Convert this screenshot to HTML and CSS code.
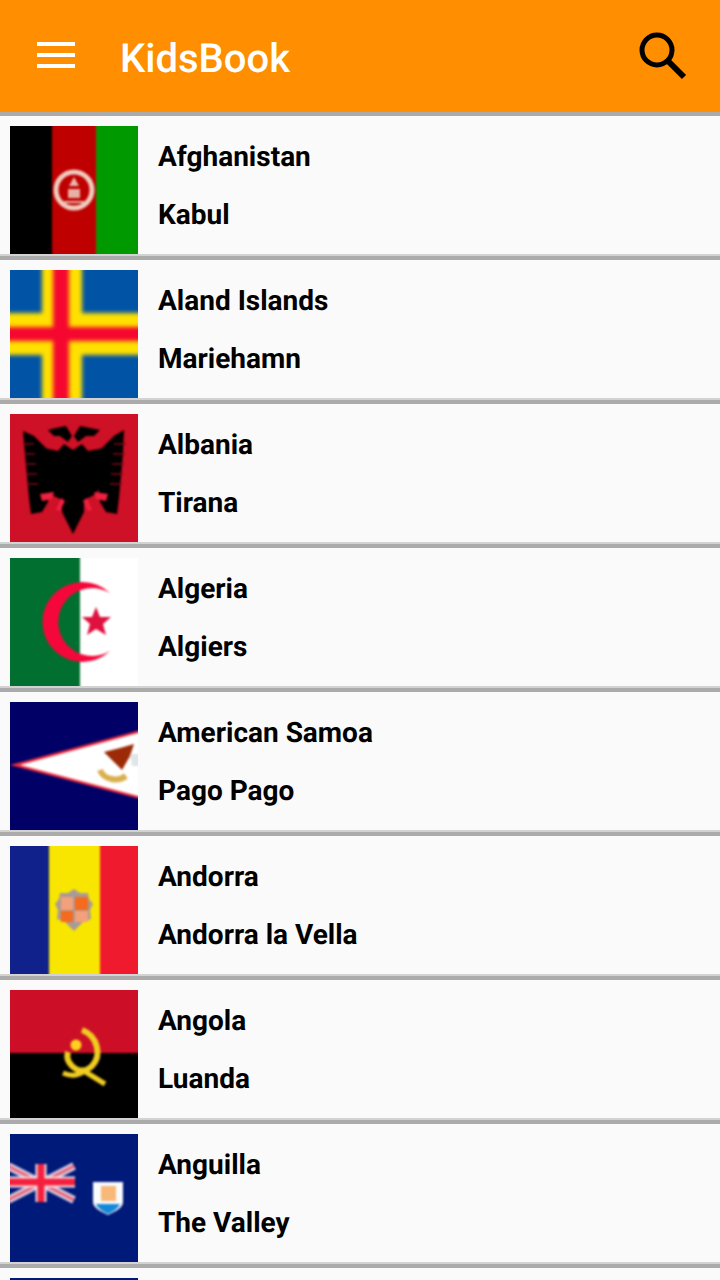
FILE: index.html
```html
<!DOCTYPE html>
<html lang="en">
<head>
<meta charset="utf-8">
<title>KidsBook</title>
<link rel="stylesheet" href="styles.css">
</head>
<body>
<div class="screen">
  <header class="appbar">
    <button class="menu-btn" aria-label="Menu"><span></span><span></span><span></span></button>
    <h1 class="title">KidsBook</h1>
    <svg class="search" viewBox="0 0 60 60" aria-label="Search"><circle cx="27" cy="25" r="15" fill="none" stroke="#000" stroke-width="5"/><path d="M38 36 L54 52" stroke="#000" stroke-width="6" fill="none"/></svg>
  </header>
  <ul class="list">
    <li class="row">
      <svg class="flag" viewBox="0 0 128 128"><g class="art">
        <rect x="-5" y="-5" width="47" height="138" fill="#000"/>
        <rect x="42" y="-5" width="44" height="138" fill="#bf0000"/>
        <rect x="86" y="-5" width="47" height="138" fill="#009a00"/>
        <circle cx="64" cy="64" r="18" fill="none" stroke="#f0cabe" stroke-width="5"/>
        <path d="M64 51 L69 60 H59 Z" fill="#eab8ac"/>
        <rect x="58" y="63" width="12" height="9" fill="#e8b0a4"/>
        <path d="M54 76 H74" stroke="#e8b8ac" stroke-width="2"/>
      </g></svg>
      <div class="names"><p>Afghanistan</p><p>Kabul</p></div>
    </li>
    <li class="row">
      <svg class="flag" viewBox="0 0 128 128"><g class="art-soft">
        <rect x="-8" y="-8" width="144" height="144" fill="#0053a5"/>
        <rect x="32" y="-8" width="40" height="144" fill="#ffe000"/>
        <rect x="-8" y="43" width="144" height="42" fill="#ffe000"/>
        <rect x="43" y="-8" width="16" height="144" fill="#f5072f"/>
        <rect x="-8" y="57" width="144" height="14" fill="#f5072f"/>
      </g></svg>
      <div class="names"><p>Aland Islands</p><p>Mariehamn</p></div>
    </li>
    <li class="row">
      <svg class="flag" viewBox="0 0 128 128"><rect width="128" height="128" fill="#ce1126"/><g class="art">
        <path fill="#000" d="M34 34 L48 37 L54 30 L63 36 L72 30 L78 37 L94 34 L95 64 L86 80 L74 86 L74 98 L68 110 L63 120 L58 110 L52 98 L52 86 L40 80 L33 64 Z"/>
        <path fill="#000" d="M38 16 L46 14 L56 12 L62 22 L58 28 L50 22 L44 22 Z M90 16 L80 14 L70 12 L64 22 L68 28 L76 22 L84 22 Z"/>
        <path fill="#000" d="M13 17 L24 22 L38 36 L40 70 L38 88 L32 98 L21 100 L19 84 L17 62 L15 40 Z"/>
        <path fill="#000" d="M114 16 L104 22 L90 36 L88 70 L90 88 L96 98 L107 100 L109 84 L111 62 L113 40 Z"/>
        <path stroke="#7e0a16" stroke-width="1.6" d="M13 30 H24 M14 40 H25 M15 50 H26 M16 60 H27 M17 70 H28 M104 30 H116 M103 40 H115 M102 50 H114 M101 60 H113 M100 70 H112"/>
        <path fill="#f02040" d="M30 80 L44 78 L42 85 L32 87 Z M98 80 L84 78 L86 85 L96 87 Z M51 84 L46 96 L50 97 L55 87 Z M77 84 L82 96 L78 97 L73 87 Z"/>
      </g></svg>
      <div class="names"><p>Albania</p><p>Tirana</p></div>
    </li>
    <li class="row">
      <svg class="flag" viewBox="0 0 128 128"><g class="art">
        <rect x="70" y="-5" width="70" height="138" fill="#fff"/>
        <rect x="-5" y="-5" width="75" height="138" fill="#006f2f"/>
        <path fill="#f5073b" d="M100 35 A40 40 0 1 0 100 93 A34 34 0 1 1 100 35 Z"/>
        <path fill="#e0103f" d="M86 49 L90 59 L101 59 L93 66 L96 77 L86 71 L77 77 L80 66 L72 59 L82 59 Z"/>
      </g></svg>
      <div class="names"><p>Algeria</p><p>Algiers</p></div>
    </li>
    <li class="row">
      <svg class="flag" viewBox="0 0 128 128"><g class="art">
        <rect x="-5" y="-5" width="138" height="138" fill="#000066"/>
        <path fill="#fff" stroke="#ef2b3d" stroke-width="2.5" d="M5 63 L135 28 V97 Z"/>
        <path fill="#9c2a06" d="M94 50 L110 46 L124 42 L120 54 L112 68 L104 60 Z"/>
        <path fill="none" stroke="#d9b04f" stroke-width="6" d="M90 68 C94 78 108 80 116 74"/>
        <path fill="#dfe5e8" d="M120 52 H130 V64 H122 Z"/>
      </g></svg>
      <div class="names"><p>American Samoa</p><p>Pago Pago</p></div>
    </li>
    <li class="row">
      <svg class="flag" viewBox="0 0 128 128"><g class="art">
        <rect x="-5" y="-5" width="44" height="138" fill="#10218b"/>
        <rect x="39" y="-5" width="51" height="138" fill="#f8e600"/>
        <rect x="90" y="-5" width="43" height="138" fill="#ef1a2d"/>
        <path fill="#a89a98" d="M64 43 L70 47 L78 47 L79 53 L83 58 L80 64 L81 73 L73 76 L64 85 L55 76 L47 73 L48 64 L45 58 L49 53 L50 47 L58 47 Z"/>
        <rect x="51" y="51" width="12" height="13" fill="#f4a07a"/>
        <rect x="65" y="51" width="13" height="13" fill="#f56a1c"/>
        <rect x="51" y="65" width="12" height="11" fill="#f56a1c"/>
        <rect x="65" y="65" width="13" height="11" fill="#f4a07a"/>
      </g></svg>
      <div class="names"><p>Andorra</p><p>Andorra la Vella</p></div>
    </li>
    <li class="row">
      <svg class="flag" viewBox="0 0 128 128"><g class="art">
        <rect x="-5" y="-5" width="138" height="138" fill="#000"/>
        <rect x="-5" y="-5" width="138" height="68" fill="#cc0f26"/>
        <path fill="none" stroke="#f0cc20" stroke-width="6" d="M72 40 C88 46 92 66 82 76 C76 82 68 82 62 76 C58 72 56 68 58 62"/>
        <path fill="none" stroke="#f0cc20" stroke-width="5" d="M53 83 C62 87 70 85 74 81 L95 94"/>
        <circle cx="66" cy="55" r="5.5" fill="#ffd020"/>
      </g></svg>
      <div class="names"><p>Angola</p><p>Luanda</p></div>
    </li>
    <li class="row">
      <svg class="flag" viewBox="0 0 128 128"><rect width="128" height="128" fill="#001a7a"/><g class="art">
        <path stroke="#d9c8d8" stroke-width="8" d="M-2 32 L64 66 M64 32 L-2 66"/>
        <path stroke="#f2506a" stroke-width="2.5" d="M-2 32 L64 66 M64 32 L-2 66"/>
        <path stroke="#f4e4ea" stroke-width="11" d="M-2 48 H65 M31 30 V68"/>
        <path stroke="#f5203f" stroke-width="7" d="M-2 48 H65 M31 30 V68"/>
        <path fill="#f8fafc" d="M83 48 H113 V68 C113 74 104 78 98 81 C92 78 83 74 83 68 Z"/>
        <path fill="#1488d8" d="M86 70 H110 C108 75 102 78 98 80 C94 78 88 75 86 70 Z"/>
        <rect x="91" y="52" width="15" height="15" fill="#f8b878"/>
      </g></svg>
      <div class="names"><p>Anguilla</p><p>The Valley</p></div>
    </li>
    <li class="row" aria-hidden="true">
      <svg class="flag" viewBox="0 0 128 128"><rect width="128" height="128" fill="#001a7a"/></svg>
    </li>
  </ul>
</div>
</body>
</html>
```
FILE: styles.css
```css
* { box-sizing: border-box; }
html, body { margin: 0; padding: 0; }
body { background: #fafafa; font-family: Roboto, "Noto Sans", sans-serif; text-rendering: geometricPrecision; }
.screen { width: 720px; height: 1280px; overflow: hidden; }
.appbar {
  height: 112px;
  background: #ff8f00;
  display: flex;
  align-items: center;
  padding-left: 37px;
}
.menu-btn {
  width: 38px;
  height: 26px;
  padding: 0;
  border: 0;
  background: none;
  display: flex;
  flex-direction: column;
  justify-content: space-between;
  margin-top: -2px;
}
.menu-btn span { display: block; height: 4px; background: #fff; }
.title {
  margin: 4px 0 0 45px;
  flex: 1;
  font-size: 40px;
  font-weight: 500;
  color: #fff;
}
.search { width: 60px; height: 60px; margin: -3px 30px 0 0; filter: blur(0.5px); }
.list { list-style: none; margin: 0; padding: 0; }
.row {
  height: 144px;
  border-top: 4px solid #ababab;
  border-bottom: 2px solid #d2d2d2;
  padding: 10px 0 0 10px;
  display: flex;
  gap: 20px;
}
.flag { width: 128px; height: 128px; flex: none; display: block; }
.art { filter: blur(1.3px); }
.art-soft { filter: blur(2px); }
.names { padding-top: 11px; }
.names p {
  margin: 0 0 18px;
  height: 40px;
  line-height: 40px;
  font-size: 28px;
  font-weight: 700;
  color: #000;
}
```
